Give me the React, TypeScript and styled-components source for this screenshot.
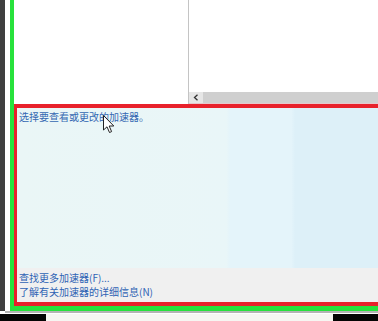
import React from "react";
import styled, { createGlobalStyle } from "styled-components";

const Global = createGlobalStyle`
  html, body { margin: 0; padding: 0; background: #ffffff; }
  body { font-family: "Noto Sans CJK SC", "Noto Sans", sans-serif; }
`;

const Screen = styled.div`
  position: relative;
  width: 378px;
  height: 321px;
  overflow: hidden;
  display: flex;
  flex-direction: column;
  background: #ffffff;
`;

const Main = styled.div`
  height: 311px;
  display: flex;
  flex-direction: row;
`;

const DarkStrip = styled.div`
  width: 5px;
  background: #3f3f3f;
`;

const Spacer = styled.div<{ $w: number }>`
  width: ${(p) => p.$w}px;
  background: #ffffff;
`;

const GreenFrame = styled.div`
  flex: 1;
  display: flex;
  flex-direction: column;
  border-left: 4px solid #27e23c;
  border-bottom: 5px solid #27e23c;
  min-width: 0;
`;

const TopPane = styled.div`
  height: 104px;
  display: flex;
  flex-direction: row;
`;

const LeftPane = styled.div`
  width: 174px;
  background: #ffffff;
`;

const RightPane = styled.div`
  flex: 1;
  display: flex;
  flex-direction: column;
  border-left: 1px solid #c4c4c4;
`;

const ListArea = styled.div`
  flex: 1;
  background: #ffffff;
`;

const HScroll = styled.div`
  height: 11px;
  display: flex;
  flex-direction: row;
  background: #cfcfcf;
  border-bottom: 1px solid #e6c8cc;
`;

const ScrollButton = styled.div`
  width: 14px;
  display: flex;
  align-items: center;
  justify-content: center;
  background: #e6e6e6;
`;

const RedFrame = styled.div`
  flex: 1;
  display: flex;
  flex-direction: column;
  border-top: 4px solid #e8212b;
  border-left: 3px solid #e8212b;
  border-bottom: 4px solid #e8212b;
`;

const InfoArea = styled.div`
  flex: 1;
  padding: 2px 0 0 2px;
  background: linear-gradient(
    to right,
    #eaf6f6 0%,
    #e9f6f8 58%,
    #e4f4fa 59%,
    #e4f4fa 76%,
    #ddf0f8 77%,
    #ddf0f8 100%
  );
`;

const Hint = styled.div`
  font-size: 10px;
  line-height: 13px;
  color: #3568b2;
  white-space: nowrap;
`;

const Footer = styled.div`
  height: 34px;
  box-sizing: border-box;
  padding: 3px 0 0 2px;
  background: #f0f0f0;
  display: flex;
  flex-direction: column;
`;

const LinkText = styled.span`
  font-size: 10px;
  line-height: 14px;
  color: #2f63b4;
  white-space: nowrap;
`;

const GrayLine = styled.div`
  height: 2px;
  background: #b4b4b4;
  margin-left: 5px;
`;

const BottomRow = styled.div`
  flex: 1;
  display: flex;
  flex-direction: row;
  justify-content: space-between;
  background: #f6f6f2;
  margin-top: 1px;
`;

const BlackBlock = styled.div<{ $w: number }>`
  width: ${(p) => p.$w}px;
  background: #050505;
`;

const Cursor = styled.svg`
  position: absolute;
  left: 103px;
  top: 115px;
`;

export default function App() {
  return (
    <>
      <Global />
      <Screen>
        <Main>
          <DarkStrip />
          <Spacer $w={5} />
          <GreenFrame>
            <TopPane>
              <LeftPane />
              <RightPane>
                <ListArea />
                <HScroll>
                  <ScrollButton>
                    <svg width="6" height="7" viewBox="0 0 6 7">
                      <path d="M4.5 0.8 L1.5 3.5 L4.5 6.2" fill="none" stroke="#333" strokeWidth="1.3" />
                    </svg>
                  </ScrollButton>
                </HScroll>
              </RightPane>
            </TopPane>
            <RedFrame>
              <InfoArea>
                <Hint>选择要查看或更改的加速器。</Hint>
              </InfoArea>
              <Footer>
                <LinkText>查找更多加速器(F)...</LinkText>
                <LinkText>了解有关加速器的详细信息(N)</LinkText>
              </Footer>
            </RedFrame>
          </GreenFrame>
        </Main>
        <GrayLine />
        <BottomRow>
          <BlackBlock $w={46} />
          <BlackBlock $w={45} />
        </BottomRow>
        <Cursor width="12" height="19" viewBox="0 0 12 19">
          <path
            d="M0.5 0.5 L0.5 15 L4 11.8 L6.5 17.5 L8.6 16.6 L6.2 11 L10.8 11 Z"
            fill="#ffffff"
            stroke="#222"
            strokeWidth="1"
            strokeLinejoin="miter"
          />
        </Cursor>
      </Screen>
    </>
  );
}
